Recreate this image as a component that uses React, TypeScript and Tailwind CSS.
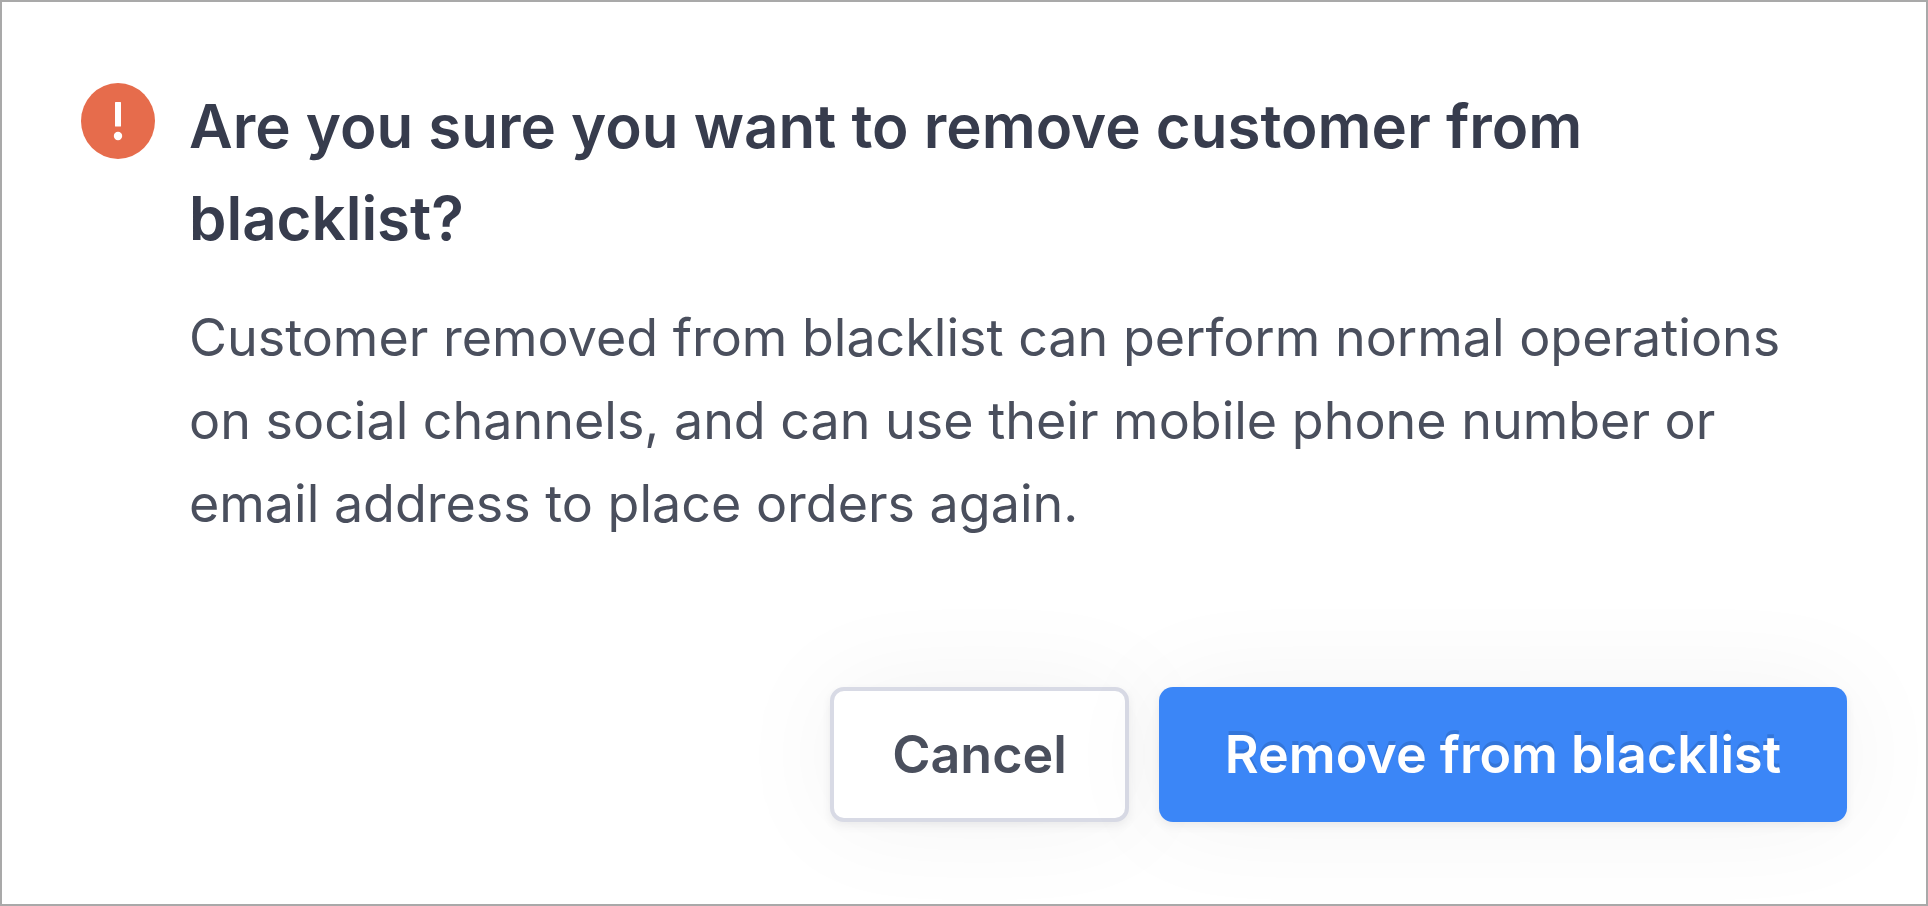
import React from 'react';

interface Props {
  title: string;
  message: string;
  confirmText: string;
}

const ConfirmDialog: React.FC<Props> = ({ title, message, confirmText }) => {
  return (
    <div
      role="alertdialog"
      aria-labelledby="dialog-title"
      aria-describedby="dialog-message"
      className="min-h-screen flex flex-col justify-between border-2 border-[#a9a9a9] bg-white px-[79px] pt-[78px] pb-[82px] font-['Inter','Liberation_Sans',sans-serif]"
    >
      <div className="flex items-start gap-[34px]">
        <svg viewBox="0 0 74 76" className="mt-[3px] w-[74px] h-[76px] shrink-0" aria-hidden="true">
          <ellipse cx="37" cy="38" rx="37" ry="38" fill="#e66c4c" />
          <rect x="34" y="19" width="6" height="24.5" rx="0.5" fill="#fff" />
          <circle cx="37" cy="53" r="4.2" fill="#fff" />
        </svg>
        <div className="flex-1">
          <h1 id="dialog-title" className="max-w-[1440px] text-[60px] leading-[92px] font-semibold text-[#373c4d]">
            {title}
          </h1>
          <p id="dialog-message" className="mt-8 text-[52px] leading-[83px] text-[#4a4f5d]">
            {message}
          </p>
        </div>
      </div>

      {/* Actions */}
      <div className="flex justify-end gap-[30px]">
        <button className="h-[135px] rounded-[14px] border-4 border-[#d8dae5] bg-white px-[58px] text-[52px] font-semibold text-[#4a4f5d] shadow-[0_4px_8px_rgba(50,54,70,0.08),0_0_112px_rgba(0,0,0,0.05)]">
          Cancel
        </button>
        <button className="h-[135px] rounded-[14px] bg-[#3b86f7] px-[66px] text-[52px] font-semibold text-white shadow-[0_4px_8px_rgba(50,54,70,0.08),0_0_112px_rgba(0,0,0,0.05)] [text-shadow:0_-4px_0_rgba(0,0,0,0.12)]">
          {confirmText}
        </button>
      </div>
    </div>
  );
};

export default function App() {
  return (
    <ConfirmDialog
      title="Are you sure you want to remove customer from blacklist?"
      message="Customer removed from blacklist can perform normal operations on social channels, and can use their mobile phone number or email address to place orders again."
      confirmText="Remove from blacklist"
    />
  );
}
